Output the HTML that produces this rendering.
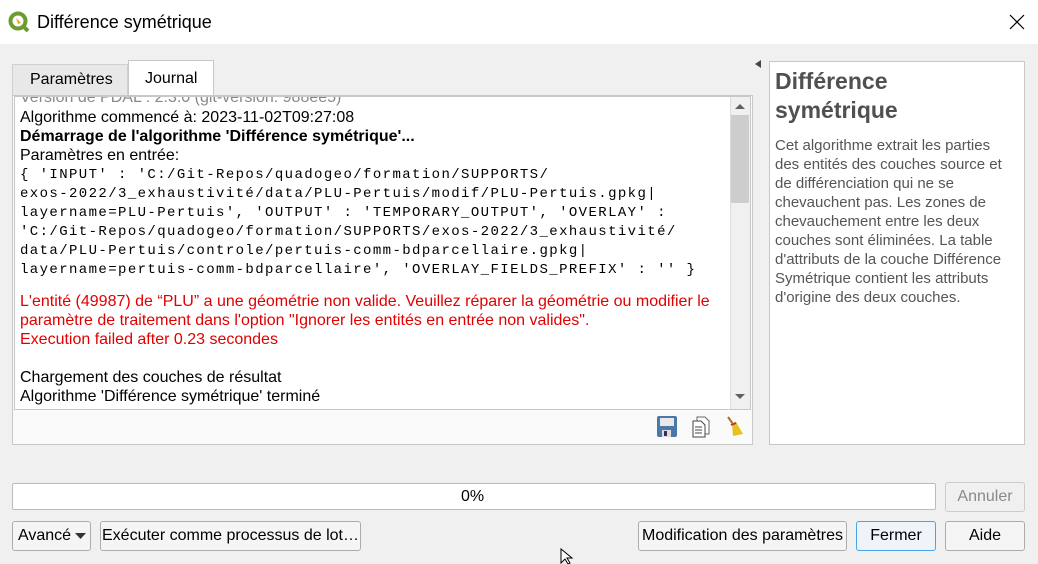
<!DOCTYPE html><html><head><meta charset="utf-8"><style>
*{margin:0;padding:0;box-sizing:border-box}
body{width:1038px;height:564px;background:#f0f0f0;font-family:"Liberation Sans",sans-serif;position:relative;overflow:hidden;color:#000}
.a{position:absolute;white-space:nowrap}
.t{font-size:16px}
.m{font-family:"Liberation Mono",monospace;font-size:14px;letter-spacing:1.4px}
.btn{position:absolute;border:1px solid #adadad;background:#f5f5f5;font-size:16px;text-align:center;line-height:28px;height:30px;border-radius:3px}
.r{color:#e00000}
</style></head><body>
<div class="a" style="left:0;top:0;width:1038px;height:44px;background:#fff"></div>
<svg class="a" style="left:8px;top:11px" width="22" height="22" viewBox="0 0 22 22"><circle cx="10" cy="10" r="7.5" fill="none" stroke="#6a9c2e" stroke-width="4"/><path d="M14 14 L20 20" stroke="#6a9c2e" stroke-width="4"/><path d="M8 7 L13 12 L10 13 Z" fill="#f0a020"/></svg>
<div class="a" style="left:37px;top:12px;font-size:18px">Différence symétrique</div>
<svg class="a" style="left:1009px;top:14px" width="16" height="16"><path d="M1 1L15 15M15 1L1 15" stroke="#000" stroke-width="1.2"/></svg>
<div class="a" style="left:12px;top:64px;width:116px;height:31px;background:#e8e8e8;border:1px solid #d0d0d0;border-bottom:none"></div>
<div class="a t" style="left:30px;top:71px">Paramètres</div>
<div class="a" style="left:128px;top:60px;width:86px;height:36px;background:#fff;border:1px solid #c8c8c8;border-bottom:none"></div>
<div class="a t" style="left:145px;top:70px">Journal</div>
<div class="a" style="left:12px;top:95px;width:741px;height:350px;border:1px solid #c8c8c8;background:#fafafa"></div>
<div class="a" style="left:14px;top:96px;width:737px;height:314px;background:#fff;border:1px solid #c8c8c8;overflow:hidden">
<div class="a t" style="left:5px;top:-8px;color:#888">Version de PDAL : 2.3.0 (git-version: 988ee5)</div>
<div class="a t" style="left:5px;top:12px">Algorithme commencé à: 2023-11-02T09:27:08</div>
<div class="a t" style="left:5px;top:31px;font-weight:bold">Démarrage de l'algorithme 'Différence symétrique'...</div>
<div class="a t" style="left:5px;top:50px">Paramètres en entrée:</div>
<div class="a m" style="left:5px;top:70px">{ 'INPUT' : 'C:/Git-Repos/quadogeo/formation/SUPPORTS/</div>
<div class="a m" style="left:5px;top:89px">exos-2022/3_exhaustivité/data/PLU-Pertuis/modif/PLU-Pertuis.gpkg|</div>
<div class="a m" style="left:5px;top:108px">layername=PLU-Pertuis', 'OUTPUT' : 'TEMPORARY_OUTPUT', 'OVERLAY' :</div>
<div class="a m" style="left:5px;top:127px">'C:/Git-Repos/quadogeo/formation/SUPPORTS/exos-2022/3_exhaustivité/</div>
<div class="a m" style="left:5px;top:146px">data/PLU-Pertuis/controle/pertuis-comm-bdparcellaire.gpkg|</div>
<div class="a m" style="left:5px;top:165px">layername=pertuis-comm-bdparcellaire', 'OVERLAY_FIELDS_PREFIX' : '' }</div>
<div class="a t r" style="left:5px;top:196px">L'entité (49987) de “PLU” a une géométrie non valide. Veuillez réparer la géométrie ou modifier le</div>
<div class="a t r" style="left:5px;top:215px">paramètre de traitement dans l'option "Ignorer les entités en entrée non valides".</div>
<div class="a t r" style="left:5px;top:234px">Execution failed after 0.23 secondes</div>
<div class="a t" style="left:5px;top:272px">Chargement des couches de résultat</div>
<div class="a t" style="left:5px;top:291px">Algorithme 'Différence symétrique' terminé</div>
<div class="a" style="left:715px;top:0;width:20px;height:312px;background:#f0f0f0;border-left:1px solid #ddd"></div>
<div class="a" style="left:716px;top:18px;width:18px;height:88px;background:#cdcdcd"></div>
<svg class="a" style="left:719px;top:5px" width="12" height="8"><path d="M1 7L6 2L11 7Z" fill="#606060"/></svg>
<svg class="a" style="left:719px;top:296px" width="12" height="8"><path d="M1 1L6 6L11 1Z" fill="#606060"/></svg>
</div>
<svg class="a" style="left:657px;top:416px" width="20" height="22"><rect x="0" y="0" width="20" height="21" rx="2" fill="#4a78a8"/><rect x="3" y="2" width="14" height="8" fill="#e8e8e8"/><rect x="5" y="14" width="9" height="7" fill="#ddd"/><rect x="7" y="15" width="3" height="5" fill="#335"/></svg>
<svg class="a" style="left:692px;top:416px" width="18" height="22"><path d="M5 1h8l4 4v13H5z" fill="#fff" stroke="#666"/><path d="M1 5h8l4 4v12H1z" fill="#fff" stroke="#444"/><path d="M3 11h7M3 14h7M3 17h7" stroke="#444"/></svg>
<svg class="a" style="left:725px;top:414px" width="22" height="26"><path d="M3 3L8 10" stroke="#b07020" stroke-width="2"/><path d="M7 9L11 8L18 20L8 22Z" fill="#e8c020"/><path d="M6 11L11 9" stroke="#c03030" stroke-width="2"/></svg>
<div class="a" style="left:755px;top:60px;width:6px;height:8px;background:#444;clip-path:polygon(100% 0,0 50%,100% 100%)"></div>
<div class="a" style="left:769px;top:61px;width:256px;height:384px;background:#fff;border:1px solid #c8c8c8"></div>
<div class="a" style="left:775px;top:67px;font-size:23px;font-weight:bold;color:#505050;line-height:29px">Différence<br>symétrique</div>
<div class="a" style="left:775px;top:136px;font-size:15px;color:#555;line-height:19px">Cet algorithme extrait les parties<br>des entités des couches source et<br>de différenciation qui ne se<br>chevauchent pas. Les zones de<br>chevauchement entre les deux<br>couches sont éliminées. La table<br>d'attributs de la couche Différence<br>Symétrique contient les attributs<br>d'origine des deux couches.</div>
<div class="a" style="left:12px;top:483px;width:924px;height:27px;background:#fff;border:1px solid #bcbcbc;border-radius:2px"></div>
<div class="a t" style="left:461px;top:488px">0%</div>
<div class="btn" style="left:945px;top:482px;width:80px;color:#8a8a8a;background:#f0f0f0;border-color:#ccc">Annuler</div>
<div class="btn" style="left:12px;top:521px;width:79px;text-align:left;padding-left:5px">Avancé<svg style="position:absolute;left:62px;top:11px" width="11" height="7"><path d="M0 0H11L5.5 6Z" fill="#333"/></svg></div>
<div class="btn" style="left:100px;top:521px;width:261px">Exécuter comme processus de lot…</div>
<div class="btn" style="left:638px;top:521px;width:209px">Modification des paramètres</div>
<div class="btn" style="left:856px;top:521px;width:80px;border-color:#4aa3e6;background:#eef4fa">Fermer</div>
<div class="btn" style="left:945px;top:521px;width:80px">Aide</div>
<svg class="a" style="left:560px;top:548px" width="16" height="16"><path d="M1 1V15L5 11L8 16L10 15L7 10L12 10Z" fill="#fff" stroke="#000"/></svg>
</body></html>
